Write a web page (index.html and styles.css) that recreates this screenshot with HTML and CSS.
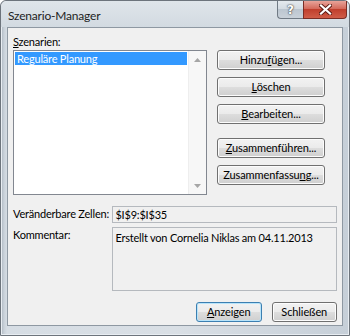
FILE: index.html
```html
<!DOCTYPE html>
<html lang="de">
<head>
    <meta charset="UTF-8">
    <meta name="viewport" content="width=device-width, initial-scale=1.0">
    <title>Szenario-Manager</title>
    <link rel="stylesheet" href="styles.css">
</head>
<body>
    <div class="window">
        <div class="titlebar">
            <span class="title">Szenario-Manager</span>
            <div class="caption-buttons">
                <div class="cap-btn help">?</div>
                <div class="cap-btn close">
                    <svg width="13" height="11" viewBox="0 0 13 11">
                        <path d="M2 1.5 L11 9.5 M11 1.5 L2 9.5" stroke="#5a1a14" stroke-width="4" stroke-linecap="square"/>
                        <path d="M2 1.5 L11 9.5 M11 1.5 L2 9.5" stroke="#ffffff" stroke-width="2.2" stroke-linecap="square"/>
                    </svg>
                </div>
            </div>
        </div>

        <div class="client">
            <div class="label top-label"><u>S</u>zenarien:</div>

            <div class="main-row">
                <div class="listbox">
                    <div class="list-items">
                        <div class="list-item selected">Reguläre Planung</div>
                    </div>
                    <div class="scrollbar">
                        <svg width="7" height="4" viewBox="0 0 7 4"><path d="M0 4 L3.5 0 L7 4 Z" fill="#a6a6a6"/></svg>
                        <svg width="7" height="4" viewBox="0 0 7 4"><path d="M0 0 L3.5 4 L7 0 Z" fill="#a6a6a6"/></svg>
                    </div>
                </div>

                <div class="button-col">
                    <button class="btn wide">Hinzu<u>f</u>ügen...</button>
                    <button class="btn wide"><u>L</u>öschen</button>
                    <button class="btn wide"><u>B</u>earbeiten...</button>
                    <button class="btn wide spaced"><u>Z</u>usammenführen...</button>
                    <button class="btn wide">Zusammenfassu<u>n</u>g...</button>
                </div>
            </div>

            <div class="field-row">
                <div class="label field-label">Veränderbare Zellen:</div>
                <div class="field single">$I$9:$I$35</div>
            </div>

            <div class="field-row comment-row">
                <div class="label field-label">Kommentar:</div>
                <div class="field multi">Erstellt von Cornelia Niklas am 04.11.2013</div>
            </div>

            <div class="bottom-row">
                <button class="btn default"><u>A</u>nzeigen</button>
                <button class="btn">Schließen</button>
            </div>
        </div>
    </div>
</body>
</html>
```

FILE: styles.css
```css
html, body {
    margin: 0;
    padding: 0;
}
body {
    width: 350px;
    height: 336px;
    overflow: hidden;
    font-family: Lato, "Noto Sans", sans-serif;
    font-size: 11px;
    letter-spacing: -0.2px;
    color: #000;
}
.window {
    box-sizing: border-box;
    width: 350px;
    height: 336px;
    padding: 0 6px 9px 6px;
    display: flex;
    flex-direction: column;
    background: linear-gradient(to right, #a9b3bd 0, #c9d1d9 3px, #d6dde4 6px, #d9dfe5 50%, #c6cfd8 100%);
    border: 1px solid #6d747c;
    border-radius: 6px 6px 0 0;
    box-shadow: inset 0 0 0 1px #e8edf2;
}
.titlebar {
    height: 26px;
    display: flex;
    align-items: flex-start;
    background: linear-gradient(to bottom, #dfe5ea, #d2dae1);
    margin: 0 -6px;
    padding: 0 0 0 6px;
    border-radius: 6px 6px 0 0;
}
.title {
    font-size: 12px;
    color: #1e1e1e;
    margin-top: 7px;
    margin-left: 1px;
}
.caption-buttons {
    margin-left: auto;
    margin-right: 2px;
    display: flex;
}
.cap-btn {
    height: 18px;
    box-sizing: border-box;
    display: flex;
    align-items: center;
    justify-content: center;
    border: 1px solid #707a84;
    border-top: none;
}
.help {
    width: 26px;
    border-right: none;
    border-radius: 0 0 0 4px;
    background: linear-gradient(to bottom, #e4e9ee 0, #d4dbe2 45%, #bcc6d0 50%, #c9d1d9 100%);
    color: #ffffff;
    font-family: "DejaVu Sans", sans-serif;
    font-weight: bold;
    font-size: 12px;
    text-shadow: 0 0 2px #333, 0 0 1px #333;
}
.close {
    width: 44px;
    border-radius: 0 0 4px 0;
    border-color: #7a2d25;
    background: linear-gradient(to bottom, #e8a49a 0, #d46a5c 45%, #c03f2d 50%, #d05d48 100%);
}
.client {
    flex: 1;
    background: #f0f0f0;
    border: 1px solid #8e98a2;
    padding: 0 5px;
    display: flex;
    flex-direction: column;
}
.label {
    line-height: 15px;
    white-space: nowrap;
}
.top-label {
    margin-top: 6px;
}
.main-row {
    display: flex;
    margin-top: 1px;
    align-items: flex-start;
}
.listbox {
    width: 194px;
    height: 145px;
    box-sizing: border-box;
    border: 1px solid #828790;
    background: #ffffff;
    display: flex;
}
.list-items {
    flex: 1;
    padding: 1px;
}
.list-item {
    height: 13px;
    line-height: 13px;
    padding-left: 2px;
    white-space: nowrap;
}
.selected {
    background: #3399ff;
    color: #ffffff;
}
.scrollbar {
    width: 17px;
    background: #f7f7f7;
    border-left: 1px solid #eeeeee;
    display: flex;
    flex-direction: column;
    justify-content: space-between;
    align-items: center;
    padding: 7px 0 6px;
}
.button-col {
    margin-left: 10px;
    display: flex;
    flex-direction: column;
    gap: 7px;
}
.btn {
    font-family: Lato, "Noto Sans", sans-serif;
    font-size: 11px;
    letter-spacing: -0.1px;
    color: #000;
    height: 20px;
    padding: 0;
    border: 1px solid #707070;
    border-radius: 3px;
    background: linear-gradient(to bottom, #f2f2f2 0, #ebebeb 48%, #dddddd 52%, #cfcfcf 100%);
    box-shadow: inset 0 0 0 1px #fcfcfc;
    line-height: 16px;
    white-space: nowrap;
}
.wide {
    width: 108px;
}
.spaced {
    margin-top: 7px;
}
.field-row {
    display: flex;
    align-items: flex-start;
    margin-top: 11px;
}
.field-label {
    width: 101px;
}
.field {
    box-sizing: border-box;
    width: 228px;
    border: 1px solid #b5b9be;
    background: #f0f0f0;
    padding: 0 2px;
    line-height: 15px;
    white-space: nowrap;
}
.single {
    height: 17px;
}
.comment-row {
    margin-top: 4px;
}
.multi {
    height: 64px;
    padding-top: 2px;
}
.bottom-row {
    display: flex;
    margin-top: 11px;
    padding-left: 183px;
    gap: 10px;
}
.bottom-row .btn {
    width: 67px;
}
.default {
    border-color: #3c7fb1;
    box-shadow: inset 0 0 0 1px #b8e4fa;
}
```
